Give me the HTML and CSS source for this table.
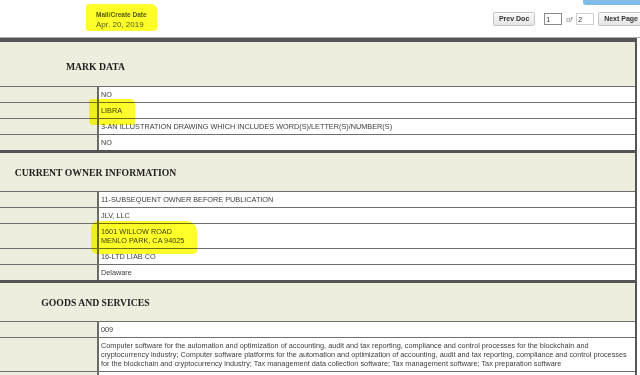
FILE: index.html
```html
<!DOCTYPE html>
<html>
<head>
<meta charset="utf-8">
<link rel="stylesheet" href="styles.css">
</head>
<body>
<div class="top">
  <div class="date-block">
    <div class="date-label">Mail/Create Date</div>
    <div class="date-value">Apr. 20, 2019</div>
    <span class="marker marker-date"></span>
  </div>
  <div class="nav">
    <button class="btn">Prev Doc</button>
    <input class="page-input cur" value="1">
    <span class="of">of</span>
    <input class="page-input" value="2">
    <button class="btn btn-next">Next Page</button>
  </div>
  <div class="blue-btn"></div>
</div>

<div class="doc">
  <section class="sec">
    <div class="sec-head first"><h2>MARK DATA</h2></div>
    <div class="row"><div class="label"></div><div class="value">NO</div></div>
    <div class="row"><div class="label"></div><div class="value"><span class="hl">LIBRA<span class="marker marker-libra"></span></span></div></div>
    <div class="row"><div class="label"></div><div class="value">3-AN ILLUSTRATION DRAWING WHICH INCLUDES WORD(S)/LETTER(S)/NUMBER(S)</div></div>
    <div class="row"><div class="label"></div><div class="value">NO</div></div>
  </section>

  <section class="sec">
    <div class="sec-head"><h2>CURRENT OWNER INFORMATION</h2></div>
    <div class="row"><div class="label"></div><div class="value">11-SUBSEQUENT OWNER BEFORE PUBLICATION</div></div>
    <div class="row"><div class="label"></div><div class="value">JLV, LLC</div></div>
    <div class="row"><div class="label"></div><div class="value"><span class="hl">1601 WILLOW ROAD<br>MENLO PARK, CA 94025<span class="marker marker-addr"></span></span></div></div>
    <div class="row"><div class="label"></div><div class="value">16-LTD LIAB CO</div></div>
    <div class="row"><div class="label"></div><div class="value">Delaware</div></div>
  </section>

  <section class="sec">
    <div class="sec-head"><h2>GOODS AND SERVICES</h2></div>
    <div class="row"><div class="label"></div><div class="value">009</div></div>
    <div class="row"><div class="label"></div><div class="value">Computer software for the automation and optimization of accounting, audit and tax reporting, compliance and control processes for the blockchain and<br>cryptocurrency industry; Computer software platforms for the automation and optimization of accounting, audit and tax reporting, compliance and control processes<br>for the blockchain and cryptocurrency industry; Tax management data collection software; Tax management software; Tax preparation software</div></div>
    <div class="row"><div class="label"></div><div class="value">&nbsp;</div></div>
  </section>
</div>
</body>
</html>
```

FILE: styles.css
```css
html, body {
  margin: 0;
  padding: 0;
  background: #ffffff;
  overflow: hidden;
}

body {
  width: 640px;
  height: 375px;
  font-family: "Liberation Sans", Arial, sans-serif;
}

.top {
  position: relative;
  height: 37px;
  display: flex;
  align-items: flex-start;
  border-bottom: 1px solid #a9a9a9;
}

.date-block {
  position: relative;
  margin-left: 96px;
  margin-top: 11px;
  color: #555a2a;
}

.date-label {
  font-weight: bold;
  font-size: 6.5px;
  line-height: 7px;
}

.date-value {
  font-size: 8px;
  line-height: 10px;
  margin-top: 2px;
}

.marker {
  position: absolute;
  background: #ffff2a;
  mix-blend-mode: multiply;
  pointer-events: none;
}

.marker-date {
  left: -10px;
  top: -7px;
  width: 71px;
  height: 27px;
  border-radius: 3px 6px 4px 3px;
}

.nav {
  margin-left: auto;
  margin-top: 12px;
  display: flex;
  align-items: center;
  margin-right: -4px;
}

.btn {
  font-family: "Liberation Sans", Arial, sans-serif;
  font-size: 7px;
  font-weight: bold;
  color: #333;
  height: 14px;
  padding: 0 5px;
  border: 1px solid #c4c4c4;
  border-radius: 2px;
  background: linear-gradient(#fbfbfb, #e4e4e4);
  line-height: 12px;
}

.btn-next {
  margin-left: 4px;
  padding: 0 5px 0 5px;
}

.page-input {
  width: 18px;
  height: 12px;
  box-sizing: border-box;
  border: 1px solid #cfcfcf;
  font-family: "Liberation Sans", Arial, sans-serif;
  font-size: 7px;
  padding: 0 1px;
  color: #333;
  margin-left: 9px;
}

.page-input.cur {
  border-color: #8a8a8a;
}

.page-input + .of + .page-input {
  margin-left: 4px;
}

.of {
  font-size: 7px;
  color: #777;
  font-style: italic;
  margin-left: 4px;
}

.blue-btn {
  position: absolute;
  right: -6px;
  top: -8px;
  width: 63px;
  height: 13px;
  background: #7fbde8;
  border-radius: 3px;
}

.doc {
  width: 637px;
  box-sizing: border-box;
  border-top: 4px solid #555555;
  border-right: 2px solid #555555;
}

.sec + .sec {
  border-top: 3px solid #555555;
}

.sec-head {
  height: 38px;
  background: #eeeede;
  display: flex;
  align-items: center;
  padding-top: 1px;
  box-sizing: border-box;
}

.sec-head.first {
  height: 44px;
  align-items: flex-start;
  padding-top: 20px;
}

.sec-head h2 {
  margin: 0;
  width: 191px;
  text-align: center;
  font-family: "Liberation Serif", "Times New Roman", serif;
  font-weight: bold;
  font-size: 9.7px;
  line-height: 10px;
  color: #1e1e1e;
}

.row {
  display: grid;
  grid-template-columns: 99px 1fr;
  border-top: 1px solid #707070;
  box-shadow: inset 0 1px 0 #cccccc;
}

.label {
  background: #eeeede;
  border-right: 2px solid #6a6a6a;
}

.value {
  background: #ffffff;
  padding: 3px 3px 3px 2px;
  font-size: 7.3px;
  line-height: 9px;
  color: #3d3d3d;
  white-space: nowrap;
}

.hl {
  position: relative;
  display: inline-block;
}

.marker-libra {
  left: -12px;
  top: -7px;
  width: 46px;
  height: 26px;
  border-radius: 2px 5px 3px 4px;
}

.marker-addr {
  left: -10px;
  top: -6px;
  width: 106px;
  height: 33px;
  border-radius: 8px 10px 4px 6px;
}
```
